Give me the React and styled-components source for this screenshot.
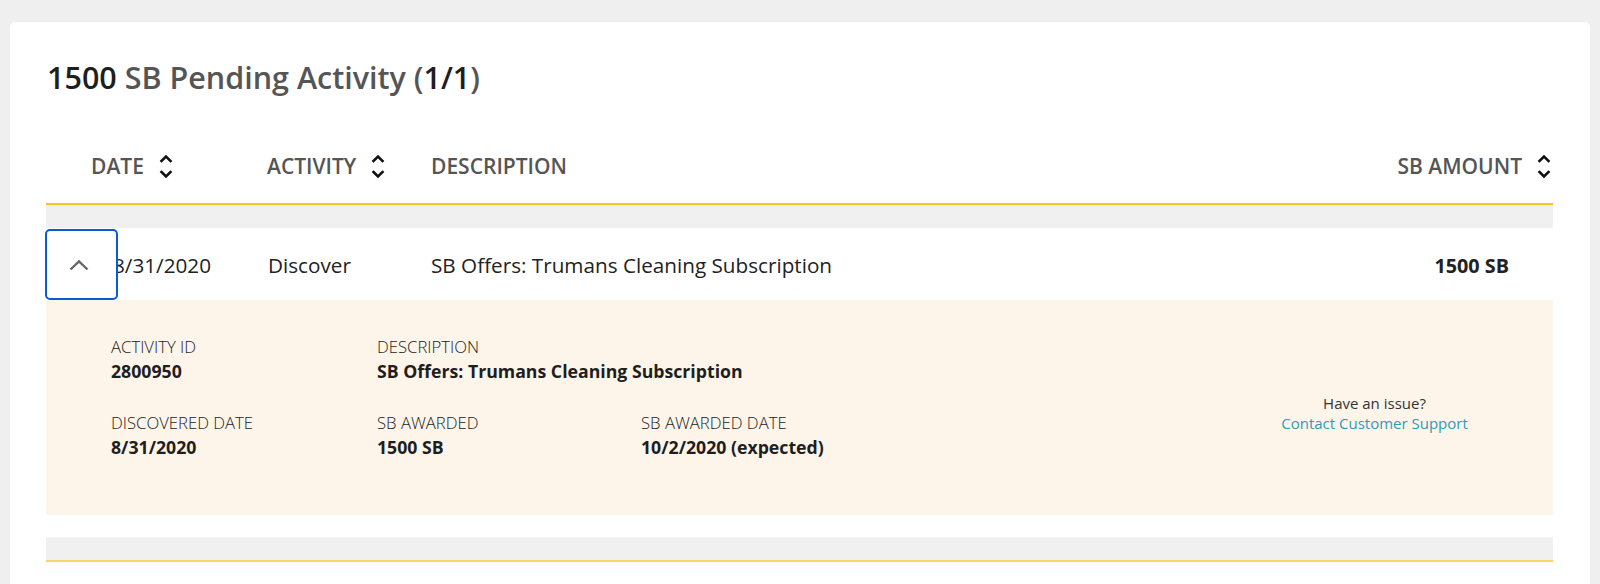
import React from "react";
import styled, { createGlobalStyle } from "styled-components";

const Global = createGlobalStyle`
  html, body { margin: 0; padding: 0; background: #efefef; }
  body { font-family: "Open Sans", "Noto Sans", sans-serif; color: #222; }
  * { box-sizing: border-box; }
`;

const Card = styled.section`
  margin: 22px 10px 0;
  background: #fff;
  border-radius: 5px;
  padding: 36px 37px 40px 36px;
  min-height: 600px;
`;

const Title = styled.h2`
  margin: 0;
  font-size: 30.5px;
  line-height: 38px;
  font-weight: 600;
  color: #555;
  padding-left: 1px;
`;

const Strong = styled.span`
  color: #1e1e1e;
`;

const Table = styled.div`
  margin-top: 33px;
`;

const cols = "45px 176px 164px 1fr auto";

const HeadRow = styled.div`
  display: grid;
  grid-template-columns: ${cols};
  align-items: center;
  height: 76px;
  border-bottom: 2px solid #fcc419;
`;

const HeadCell = styled.div`
  grid-column: ${(p) => p.$col};
  display: flex;
  align-items: center;
  gap: 15px;
  font-size: 21px;
  font-weight: 600;
  color: #555;
  text-transform: uppercase;
  justify-content: ${(p) => (p.$right ? "flex-end" : "flex-start")};
  padding-right: ${(p) => (p.$right ? 2 : 0)}px;
`;

const Spacer = styled.div`
  height: 23px;
  background: #f0f0f0;
`;

const Row = styled.div`
  position: relative;
  display: grid;
  grid-template-columns: ${cols};
  align-items: center;
  height: 72px;
  padding-top: 2px;
  background: #fff;
  font-size: 20.7px;
  color: #222;
`;

const Cell = styled.div`
  grid-column: ${(p) => p.$col};
  padding-left: ${(p) => p.$indent || 0}px;
  padding-right: ${(p) => (p.$right ? 44 : 0)}px;
  font-weight: ${(p) => (p.$bold ? 700 : 400)};
  font-size: ${(p) => (p.$bold ? "19.8px" : "inherit")};
  text-align: ${(p) => (p.$right ? "right" : "left")};
  white-space: nowrap;
`;

const ToggleButton = styled.button`
  position: absolute;
  left: -1px;
  top: 1px;
  width: 73px;
  height: 71px;
  border: 2px solid #0a5ad4;
  border-radius: 5px;
  background: #fff;
  display: flex;
  align-items: center;
  justify-content: center;
  padding: 0 6px 0 0;
  cursor: pointer;
`;

const Details = styled.div`
  background: #fdf5ea;
  height: 215px;
  display: grid;
  grid-template-columns: 266px 264px 1fr 357px;
  grid-template-rows: auto auto;
  align-content: start;
  row-gap: 28px;
  padding: 36px 0 0 65px;
`;

const Field = styled.div`
  grid-column: ${(p) => p.$col};
  grid-row: ${(p) => p.$row};
`;

const Label = styled.div`
  font-size: 16.7px;
  font-weight: 300;
  color: #222;
  line-height: 22px;
  text-transform: uppercase;
`;

const Value = styled.div`
  font-size: 17.7px;
  font-weight: 700;
  color: #1e1e1e;
  line-height: 26px;
`;

const Support = styled.div`
  grid-column: 4;
  grid-row: 1 / span 2;
  align-self: start;
  margin-top: 57px;
  text-align: center;
  font-size: 15px;
  line-height: 20px;
  color: #333;
`;

const SupportLink = styled.a`
  display: block;
  color: #2b9db3;
  text-decoration: none;
`;

const Gap = styled.div`
  height: 23px;
  background: #fff;
  border-bottom: 1px solid #f6f6f6;
`;

const Footer = styled.div`
  height: 24px;
  background: #f0f0f0;
  border-bottom: 2px solid #fcd36a;
`;

const SortIcon = () => (
  <svg width="14" height="26" viewBox="0 0 14 26" fill="none" stroke="#111" strokeWidth="2.6" strokeLinecap="square">
    <polyline points="2.5,8 7,3.5 11.5,8" />
    <polyline points="2.5,19 7,23.5 11.5,19" />
  </svg>
);

const ChevronUp = () => (
  <svg width="20" height="12" viewBox="0 0 20 12" fill="none" stroke="#666" strokeWidth="2.4">
    <polyline points="1.5,10.5 10,2.5 18.5,10.5" />
  </svg>
);

export default function App() {
  return (
    <>
      <Global />
      <Card>
        <Title>
          <Strong>1500</Strong> SB Pending Activity (<Strong>1/1</Strong>)
        </Title>
        <Table>
          <HeadRow>
            <HeadCell $col={2}>
              Date <SortIcon />
            </HeadCell>
            <HeadCell $col={3}>
              Activity <SortIcon />
            </HeadCell>
            <HeadCell $col={4}>Description</HeadCell>
            <HeadCell $col={5} $right>
              SB Amount <SortIcon />
            </HeadCell>
          </HeadRow>
          <Spacer />
          <Row>
            <Cell $col={2} $indent={22}>8/31/2020</Cell>
            <Cell $col={3} $indent={1}>Discover</Cell>
            <Cell $col={4}>SB Offers: Trumans Cleaning Subscription</Cell>
            <Cell $col={5} $right $bold>1500 SB</Cell>
            <ToggleButton aria-label="Collapse">
              <ChevronUp />
            </ToggleButton>
          </Row>
          <Details>
            <Field $col={1} $row={1}>
              <Label>Activity ID</Label>
              <Value>2800950</Value>
            </Field>
            <Field $col="2 / span 2" $row={1}>
              <Label>Description</Label>
              <Value>SB Offers: Trumans Cleaning Subscription</Value>
            </Field>
            <Field $col={1} $row={2}>
              <Label>Discovered Date</Label>
              <Value>8/31/2020</Value>
            </Field>
            <Field $col={2} $row={2}>
              <Label>SB Awarded</Label>
              <Value>1500 SB</Value>
            </Field>
            <Field $col={3} $row={2}>
              <Label>SB Awarded Date</Label>
              <Value>10/2/2020 (expected)</Value>
            </Field>
            <Support>
              Have an issue?
              <SupportLink href="#">Contact Customer Support</SupportLink>
            </Support>
          </Details>
          <Gap />
          <Footer />
        </Table>
      </Card>
    </>
  );
}
